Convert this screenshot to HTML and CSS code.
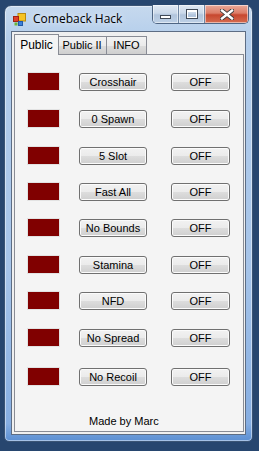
FILE: index.html
```html
<!DOCTYPE html>
<html lang="en">
  <head>
    <meta charset="UTF-8" />
    <title>Comeback Hack</title>
    <link rel="stylesheet" href="styles.css">
  </head>
  <body>
    <div class="window">
      <!-- Title bar -->
      <div class="titlebar">
        <svg class="app-icon" width="13" height="13" viewBox="0 0 13 13">
          <rect x="5" y="0.5" width="7.5" height="7.5" fill="#f6c323" stroke="#b88a10" stroke-width="1" />
          <rect x="0.5" y="3.5" width="5" height="5" fill="#e0402a" stroke="#a02515" stroke-width="1" />
          <rect x="5.5" y="8.5" width="4" height="4" fill="#3c7fd8" stroke="#215aa8" stroke-width="1" />
          <rect x="1.5" y="9.5" width="3" height="3" fill="#69b43c" />
        </svg>
        <span class="title">Comeback Hack</span>
        <div class="caption-buttons">
          <div class="cap cap-min"><span class="min-glyph"></span></div>
          <div class="cap cap-max"><span class="max-glyph"></span></div>
          <div class="cap cap-close">
            <svg width="14" height="11" viewBox="0 0 14 11">
              <path d="M2 1.5 L12 9.5 M12 1.5 L2 9.5" stroke="#3a3a3a" stroke-width="4.2" stroke-linecap="square" />
              <path d="M2 1.5 L12 9.5 M12 1.5 L2 9.5" stroke="#ffffff" stroke-width="2.4" stroke-linecap="square" />
            </svg>
          </div>
        </div>
      </div>

      <!-- Client area -->
      <div class="client">
        <div class="tabs">
          <div class="tab tab-active">Public</div>
          <div class="tab tab-wide">Public II</div>
          <div class="tab tab-info">INFO</div>
        </div>
        <div class="panel">
          <div class="row">
            <div class="status"></div>
            <button class="btn btn-name">Crosshair</button>
            <button class="btn btn-off">OFF</button>
          </div>
          <div class="row">
            <div class="status"></div>
            <button class="btn btn-name">0 Spawn</button>
            <button class="btn btn-off">OFF</button>
          </div>
          <div class="row">
            <div class="status"></div>
            <button class="btn btn-name">5 Slot</button>
            <button class="btn btn-off">OFF</button>
          </div>
          <div class="row">
            <div class="status"></div>
            <button class="btn btn-name">Fast All</button>
            <button class="btn btn-off">OFF</button>
          </div>
          <div class="row">
            <div class="status"></div>
            <button class="btn btn-name">No Bounds</button>
            <button class="btn btn-off">OFF</button>
          </div>
          <div class="row">
            <div class="status"></div>
            <button class="btn btn-name">Stamina</button>
            <button class="btn btn-off">OFF</button>
          </div>
          <div class="row">
            <div class="status"></div>
            <button class="btn btn-name">NFD</button>
            <button class="btn btn-off">OFF</button>
          </div>
          <div class="row">
            <div class="status"></div>
            <button class="btn btn-name">No Spread</button>
            <button class="btn btn-off">OFF</button>
          </div>
          <div class="row">
            <div class="status"></div>
            <button class="btn btn-name">No Recoil</button>
            <button class="btn btn-off">OFF</button>
          </div>
          <div class="credit">Made by Marc</div>
        </div>
      </div>
    </div>
  </body>
</html>
```

FILE: styles.css
```css
body {
  margin: 0;
  width: 259px;
  height: 451px;
  overflow: hidden;
  background: #27466f;
  font-family: "Liberation Sans", Arial, sans-serif;
}

/* Window frame */
.window {
  box-sizing: border-box;
  width: 249px;
  height: 437px;
  margin: 5px 0 0 4px;
  padding: 0 6px 6px 6px;
  display: flex;
  flex-direction: column;
  border: 1px solid #3b5474;
  border-radius: 7px 7px 5px 5px;
  background: linear-gradient(#c6d9ee 0%, #b3cdeb 8%, #a6c4e9 60%, #86aee2 96%, #5b8fd3 100%);
  box-shadow: inset 0 0 0 1px rgba(255, 255, 255, 0.45);
}

/* Title bar */
.titlebar {
  height: 25px;
  display: flex;
  align-items: flex-start;
}

.app-icon {
  margin: 7px 0 0 2px;
}

.title {
  margin: 4px 0 0 7px;
  font-family: "Open Sans", "Noto Sans", sans-serif;
  font-size: 12px;
  color: #000;
  text-shadow: 0 0 6px rgba(255, 255, 255, 0.9);
}

.caption-buttons {
  display: flex;
  margin: -1px -3px 0 auto;
  height: 18px;
  border: 1px solid #4e6583;
  border-top: none;
  border-radius: 0 0 5px 5px;
  overflow: hidden;
}

.cap {
  display: flex;
  align-items: center;
  justify-content: center;
  height: 18px;
  box-shadow: inset 0 0 0 1px rgba(255, 255, 255, 0.5);
}

.cap-min,
.cap-max {
  width: 25px;
  background: linear-gradient(#dfe8f3 0%, #cbd9ea 45%, #b1c4dc 55%, #bdd0e6 100%);
  border-right: 1px solid #6f86a3;
}

.cap-close {
  width: 43px;
  background: linear-gradient(#e9a999 0%, #dc7d68 45%, #c7472f 55%, #d56c50 100%);
}

.min-glyph {
  width: 9px;
  height: 2px;
  margin-top: 6px;
  background: #fff;
  border: 1px solid #404a58;
}

.max-glyph {
  width: 8px;
  height: 5px;
  border: 1px solid #fff;
  border-top-width: 2px;
  outline: 1px solid #404a58;
}

/* Client area */
.client {
  flex: 1;
  display: flex;
  flex-direction: column;
  padding: 1px 1px 2px 2px;
  background: #f0f0f0;
  border: 1px solid #5d6d84;
}

.tabs {
  display: flex;
  align-items: flex-end;
  height: 20px;
  margin-top: 1px;
}

.tab {
  box-sizing: border-box;
  height: 18px;
  padding-top: 2px;
  text-align: center;
  font-size: 11px;
  color: #000;
  border: 1px solid #898c95;
  border-bottom: none;
  background: linear-gradient(#f3f3f3 0%, #ebebeb 50%, #dddddd 51%, #cfcfcf 100%);
}

.tab-active {
  position: relative;
  z-index: 1;
  width: 45px;
  height: 21px;
  margin-bottom: -1px;
  padding-top: 3px;
  font-size: 12px;
  background: #f4f4f4;
}

.tab-wide {
  width: 49px;
  margin-left: -1px;
  border-left: none;
}

.tab-info {
  width: 41px;
  margin-left: -1px;
}

.panel {
  flex: 1;
  display: flex;
  flex-direction: column;
  padding: 17px 0 0 12px;
  background: #f4f4f4;
  border: 1px solid #898c95;
}

.row {
  display: flex;
  align-items: center;
  height: 19px;
  margin-bottom: 18px;
}

.row:nth-child(3),
.row:nth-child(4),
.row:nth-child(6) {
  margin-bottom: 17px;
}

.row:nth-child(8) {
  margin-bottom: 20px;
}

.status {
  box-sizing: border-box;
  width: 33px;
  height: 19px;
  background: #800000;
  border: 1px solid #e2e2e2;
}

.btn {
  box-sizing: border-box;
  height: 18px;
  padding: 0;
  font-family: "Liberation Sans", Arial, sans-serif;
  font-size: 11px;
  color: #000;
  border: 1px solid #707070;
  border-radius: 3px;
  background: linear-gradient(#f2f2f2 0%, #ebebeb 50%, #dddddd 51%, #cfcfcf 100%);
  box-shadow: inset 0 0 0 1px #fbfbfb;
}

.btn-name {
  width: 68px;
  margin-left: 19px;
}

.btn-off {
  width: 59px;
  margin-left: 24px;
}

.credit {
  margin: auto 0 4px 62px;
  font-size: 11px;
  color: #000;
}
```
